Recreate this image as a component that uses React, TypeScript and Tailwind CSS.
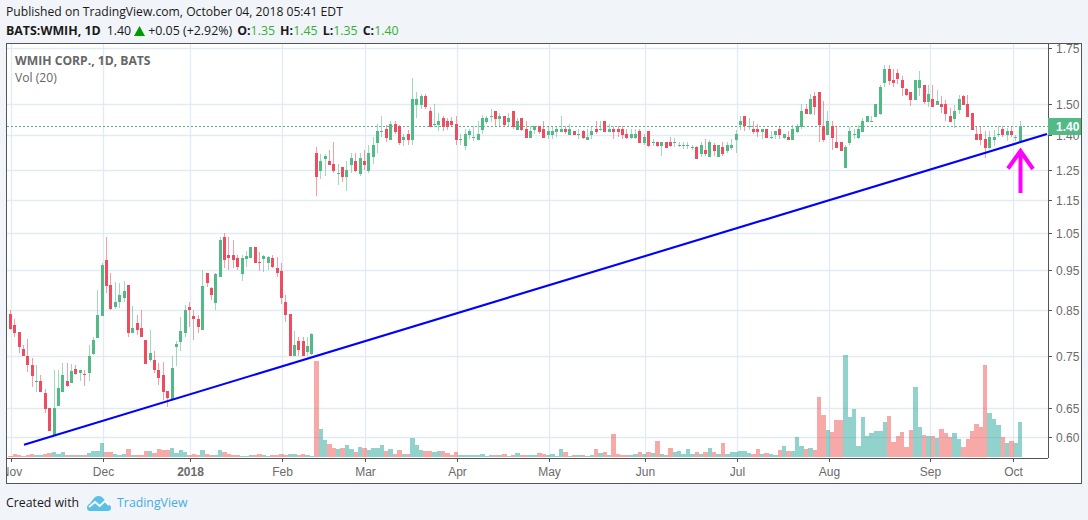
import React from "react";

// candles, as read off the picture: dir wickTop bodyTop bodyBottom wickBottom
// each block has its own scale: y = base + v / 3
const blocks: { base: number; rows: string }[] = [
  {
    base: 220,
    rows: "r 270 282 326 330|r 297 315 338 350|r 335 335 380 398|r 375 387 407 408|r 357 408 435 455|r 415 435 468 500|g 435 483 485 515|r 465 483 515 516|r 507 519 566 578|r 564 564 632 633|g 450 564 648 648|g 450 504 558 558|g 430 465 515 516|r 430 483 498 500|g 433 453 489 490|r 435 447 462 465|g 450 450 459 483|r 450 462 465 498|g 375 408 459 483|g 350 360 402 405|g 210 285 353 355|g 128 135 288 288|r 50 120 198 220|r 160 195 267 270|g 185 247 262 268|g 190 225 247 265|g 183 213 234 245|r 195 195 339 352|g 258 324 339 340|r 285 309 331 345|r 270 324 351 352|r 360 360 432 432|g 330 399 420 425|r 393 420 450 460|r 430 450 474 495|r 427 465 516 540|r 513 513 534 560|g 408 444 537 540|g 363 372 381 438|g 290 333 366 392|g 255 270 339 352|r 246 261 270 320|r 270 288 297 360|r 285 297 321 340|g 150 198 330 330|r 159 159 189 200|r 200 204 225 240|g 160 162 249 270|g 52 60 171 172|r 40 51 120 145|r 52 105 114 150|r 60 105 120 143|r 105 114 141 150|g 105 114 162 183|g 92 108 117 140|g 82 82 114 115|r 82 82 129 130|r 95 126 129 153|g 105 108 117 155|g 108 111 129 150|r 105 114 141 145|r 110 144 159 172|r 130 153 234 252|r 225 246 285 305|r 282 282 408 408|g 333 375 408 408|r 352 363 390 408|r 352 363 408 408|g 352 378 396 408|g 340 342 402 405",
  },
  {
    base: 70,
    rows: "r 231 249 321 378|g 252 273 303 327|g 252 258 267 318|r 240 273 285 285|r 216 282 303 309|g 282 309 312 345|r 290 291 321 336|g 273 300 321 363|g 249 264 285 310|r 250 273 303 306|g 249 264 312 318|r 240 273 285 300|g 225 249 303 309|g 201 225 261 282|g 162 183 219 249|g 138 183 185 201|r 165 177 204 216|g 153 162 210 210|r 153 162 186 192|r 165 168 219 225|g 192 201 210 228|r 180 192 210 225|g 24 87 210 225|g 66 87 105 144|g 72 78 105 117|r 72 78 111 117|r 111 123 171 172|g 102 162 165 171|g 129 153 165 183|r 138 144 171 183|r 144 153 171 180|r 141 153 165 168|r 138 162 210 225|g 192 207 210 225|g 177 192 228 240|g 177 183 195 207|g 168 201 204 213|g 153 192 210 210|g 135 144 180 192|g 138 144 156 162|g 117 138 141 156|r 123 123 147 168|g 129 138 147 170|r 138 138 165 168|g 129 144 156 170|r 123 123 171 177|g 144 153 180 180|r 144 144 180 183|r 153 177 204 204|g 168 183 204 204|g 168 168 180 192|r 168 168 186 192|r 153 177 204 204|g 168 183 195 207|g 168 183 195 207|g 168 177 186 201|g 138 177 186 186|r 168 177 186 192|g 162 177 195 195|r 183 183 195 195|g 177 192 195 207|r 180 183 204 207|g 177 201 210 210|g 168 183 195 207|r 153 177 186 192|g 153 177 180 183|r 153 153 186 186|g 162 177 186 186|r 168 177 186 207|r 168 177 186 201|r 168 177 195 207|r 177 192 204 207",
  },
  {
    base: 60,
    rows: "g 207 222 234 237|g 207 222 234 237|r 207 213 249 250|g 222 231 249 255|r 213 213 258 261|g 237 246 249 258|r 246 246 258 261|g 246 246 258 288|r 246 246 264 264|r 231 246 258 261|g 234 246 249 261|g 246 255 258 261|g 246 255 258 267|g 246 255 258 267|g 255 261 264 270|r 258 261 297 297|g 246 255 282 291|r 237 270 282 288|g 240 246 291 291|r 249 255 273 288|g 255 255 291 291|r 246 261 282 288|g 246 255 273 279|g 237 255 264 270|g 210 222 240 279|g 168 183 195 210|r 168 168 198 213|g 174 198 201 210|r 183 207 216 222|r 192 207 216 231|g 207 207 216 237|r 207 207 234 234|g 213 231 234 237|g 213 213 225 237|r 198 207 225 237|g 222 222 234 237|r 213 231 240 240|g 195 207 240 240|g 192 198 216 219|g 132 153 201 207|r 132 147 162 162|g 102 117 162 165|r 96 108 141 165|r 96 96 195 246|r 123 198 240 246|g 153 183 225 225|r 183 198 234 270|r 198 246 264 264|r 246 246 273 273|g 255 261 324 324|g 201 213 249 255|g 207 222 225 237|g 195 207 234 237|g 174 183 216 216|g 168 168 186 186|g 168 183 186 186|g 132 132 171 171|g 75 81 162 165|g 15 27 69 81|r 15 27 63 75|r 27 60 69 81|r 27 39 57 72",
  },
  {
    base: 40,
    rows: "r 108 120 144 168|r 144 147 165 168|r 156 156 180 198|g 120 120 180 180|g 93 120 144 168|r 135 135 186 192|g 135 162 186 200|r 135 177 201 201|g 150 183 195 195|r 168 192 201 219|r 180 192 222 243|r 205 228 246 246|g 195 213 237 265|g 165 177 210 222|r 165 168 195 195|r 165 192 231 231|r 219 219 270 270|r 258 282 300 300|r 258 282 300 315|r 273 297 324 354|g 273 291 324 327|g 270 291 300 318|g 258 283 286 290|r 258 267 285 290|g 265 273 285 303|r 258 273 285 290|g 285 291 294 303|g 243 258 303 303",
  },
];

const candles = blocks.flatMap((b) =>
  b.rows.split("|").map((row) => {
    const [dir, a, c, d, e] = row.split(" ");
    return {
      up: dir === "g",
      wickTop: b.base + Number(a) / 3,
      top: b.base + Number(c) / 3,
      bottom: b.base + Number(d) / 3,
      wickBottom: b.base + Number(e) / 3,
    };
  })
);

// volume bars, heights at 3x, one per candle
const volumes =
  "r3 r9 r6 r3 r6 r9 g6 g6 r9 r12 g15 g9 g15 r6 g6 r6 g6 r6 g12 g18 g18 g42 r15 r15 g9 g6 g9 r24 g6 r6 r6 r18 g18 r12 r24 r21 r21 g27 g12 g21 g15 r6 r9 r6 g21 r9 r6 g6 g21 r15 r9 r6 r6 g3 g3 g6 r6 r9 g6 g3 r6 r6 r9 r6 g9 g9 r6 r9 g6 g3 " +
  "r288 g84 g51 r39 r27 g24 r27 g36 g24 r15 g30 r27 g21 g27 g27 g36 r18 g24 r9 r21 g9 r9 g57 g36 g21 r18 r18 g15 g18 r18 r12 r6 r15 g6 g6 g6 g6 g6 g9 g3 g6 r6 g6 r9 g3 r6 g12 r6 r6 g6 g6 r12 r9 g6 g9 g3 g24 r15 g3 r6 g6 r6 g3 g6 r24 g12 r15 g6 r69 r9 r6 r6 g6 g9 r15 g9 r15 g12 r48 g9 r6 r27 g15 g18 g9 g24 g9 r15 g9 r15 g27 r15 g9 r42 g9 g15 g15 g18 g18 g12 r9 r24 " +
  "g9 r12 g9 g6 r21 g33 r18 g18 g60 g33 r24 g27 r21 r180 r126 g81 r75 r111 r111 g306 g120 g144 g33 g120 g63 g72 g78 g78 g105 r123 r45 r63 r75 r30 r81 g210 g90 r66 g63 r63 g57 r84 r72 r60 g72 g54 r30 r54 r78 r99 r90 r276 g132 g114 g96 r60 g42 r48 g42 g105";

const volumeBars = volumes.split(" ").map((v) => ({
  up: v[0] === "g",
  height: Number(v.slice(1)) / 3,
}));

const candleX = (i: number) => 10.33 + 4.372 * i;

const priceTicks = [
  { label: "1.75", y: 48 },
  { label: "1.50", y: 104 },
  { label: "1.40", y: 135 },
  { label: "1.25", y: 170 },
  { label: "1.15", y: 200 },
  { label: "1.05", y: 233 },
  { label: "0.95", y: 270 },
  { label: "0.85", y: 310 },
  { label: "0.75", y: 356 },
  { label: "0.65", y: 408 },
  { label: "0.60", y: 437 },
];

const timeTicks = [
  { label: "Nov", x: 11 },
  { label: "Dec", x: 103 },
  { label: "2018", x: 190, bold: true },
  { label: "Feb", x: 282 },
  { label: "Mar", x: 365 },
  { label: "Apr", x: 457 },
  { label: "May", x: 549 },
  { label: "Jun", x: 645 },
  { label: "Jul", x: 737 },
  { label: "Aug", x: 829 },
  { label: "Sep", x: 930 },
  { label: "Oct", x: 1013 },
];

const GREEN = "#53b987";
const RED = "#ee4d5f";
const AXIS_FONT = "'Liberation Sans', Arial, sans-serif";

const Chart: React.FC = () => (
  <svg viewBox="7 44 1074 439" className="block h-[439px] w-[1074px]">
    {/* grid */}
    <g stroke="#e1ebf3" strokeWidth="1.3">
      {priceTicks.map((t) => (
        <line key={t.label} x1="7" x2="1048" y1={t.y + 0.5} y2={t.y + 0.5} />
      ))}
      {timeTicks.map((t) => (
        <line key={t.label} x1={t.x + 0.5} x2={t.x + 0.5} y1="44" y2="458" />
      ))}
    </g>

    {/* volume */}
    <g shapeRendering="crispEdges" fillOpacity="0.5">
      {volumeBars.map((v, i) => {
        const left = Math.round(candleX(i) - 2.2);
        const right = Math.round(candleX(i + 1) - 2.2);
        return (
          <rect
            key={i}
            x={left}
            y={457 - v.height}
            width={right - left}
            height={v.height}
            fill={v.up ? "#26a69a" : "#ef5350"}
          />
        );
      })}
    </g>

    {/* last price line */}
    <line x1="7" x2="1048" y1="126.5" y2="126.5" stroke={GREEN} strokeDasharray="2 2" shapeRendering="crispEdges" />

    {/* candles */}
    <g shapeRendering="crispEdges">
      {candles.map((c, i) => {
        const x = Math.round(candleX(i) - 1.5);
        const color = c.up ? GREEN : RED;
        return (
          <g key={i}>
            <rect x={x + 1} y={c.wickTop} width="1" height={c.wickBottom - c.wickTop} fill={color} fillOpacity="0.55" />
            <rect x={x} y={c.top} width="3" height={Math.max(c.bottom - c.top, 1)} fill={color} />
          </g>
        );
      })}
    </g>

    {/* drawings */}
    <line x1="24" y1="444.7" x2="1047" y2="134" stroke="#0000ff" strokeWidth="2.1" />
    <path d="M1020.5 193V151M1008 168.5L1020.5 151L1033 169" fill="none" stroke="#ff00ff" strokeWidth="4" />

    {/* price axis */}
    <rect x="1048" y="44" width="33" height="439" fill="#ffffff" />
    <line x1="1048.5" x2="1048.5" y1="44" y2="458" stroke="#555555" shapeRendering="crispEdges" />
    {priceTicks.map((t) => (
      <g key={t.label}>
        <line x1="1048" x2="1052" y1={t.y + 0.5} y2={t.y + 0.5} stroke="#555555" shapeRendering="crispEdges" />
        <text x="1056" y={t.y + 4.5} fontSize="12" fill="#6b6b6b" fontFamily={AXIS_FONT}>
          {t.label}
        </text>
      </g>
    ))}
    <rect x="1048" y="118" width="33" height="17" fill={GREEN} />
    <text x="1056" y="131" fontSize="12" fontWeight="700" fill="#ffffff" fontFamily={AXIS_FONT}>
      1.40
    </text>

    {/* time axis */}
    <line x1="7" x2="1048" y1="458.5" y2="458.5" stroke="#555555" shapeRendering="crispEdges" />
    {timeTicks.map((t) => (
      <g key={t.label}>
        <line x1={t.x + 0.5} x2={t.x + 0.5} y1="458" y2="462" stroke="#555555" shapeRendering="crispEdges" />
        <text x={t.x + 0.5} y="476" textAnchor="middle" fontSize="12" fontWeight={t.bold ? 700 : 400} fill="#6b6b6b" fontFamily={AXIS_FONT}>
          {t.label}
        </text>
      </g>
    ))}
  </svg>
);

const Ohlc: React.FC<{ k: string; v: string }> = ({ k, v }) => (
  <span className="ml-[5px]">
    <span className="font-bold">{k}:</span>
    <span className="text-[#35b035]">{v}</span>
  </span>
);

const App: React.FC = () => (
  <div className="flex h-[520px] w-[1088px] flex-col overflow-hidden bg-[#f1f4f8] px-[6px] font-['Open_Sans',sans-serif] text-[12.15px] text-[#1a1a1a]">
    <div className="flex h-[21px] items-end leading-[18px]">Published on TradingView.com, October 04, 2018 05:41 EDT</div>
    <div className="flex h-[19px] items-center whitespace-pre text-[12.4px] leading-[18px]">
      <span className="font-bold">BATS:WMIH, 1D</span>
      <span className="ml-[6px]">1.40</span>
      <svg viewBox="0 0 11 10" className="ml-[3px] mr-[3px] h-[10px] w-[11px]">
        <path d="M5.5 0L11 10H0Z" fill="#009900" />
      </svg>
      <span>+0.05 (+2.92%)</span>
      <Ohlc k="O" v="1.35" />
      <Ohlc k="H" v="1.45" />
      <Ohlc k="L" v="1.35" />
      <Ohlc k="C" v="1.40" />
    </div>

    <div className="relative mt-[3px] h-[441px] w-[1076px] border border-[#555555] bg-white">
      <Chart />
      <div className="absolute left-[8px] top-[8px] text-[#666666]">
        <div className="font-bold leading-[17px]">WMIH CORP., 1D, BATS</div>
        <div className="leading-[17px]">Vol (20)</div>
      </div>
    </div>

    <div className="mt-[9px] flex h-[20px] items-center text-[12.3px]">
      <span>Created with</span>
      <svg viewBox="0 0 24 15" className="ml-[8px] h-[15px] w-[24px]">
        <path d="M0 12C0 9.5 1.5 8 3 7.6C3.5 6.5 5 4.5 6.5 3C7.5 1.2 9.5 0 11.5 0C14 0 16 1.3 17 3.2C18 4 19.5 6 20.5 7.5C22.5 8.5 24 10 24 12C24 13.8 22.6 15 21 15H3C1.4 15 0 13.8 0 12Z" fill="#5ac0e8" />
        <path d="M2 11L8 6L12.7 10L18 5L22 9" fill="none" stroke="#ffffff" strokeWidth="1.8" />
      </svg>
      <span className="ml-[6px] text-[#45aee5]">TradingView</span>
    </div>
  </div>
);

export default App;
